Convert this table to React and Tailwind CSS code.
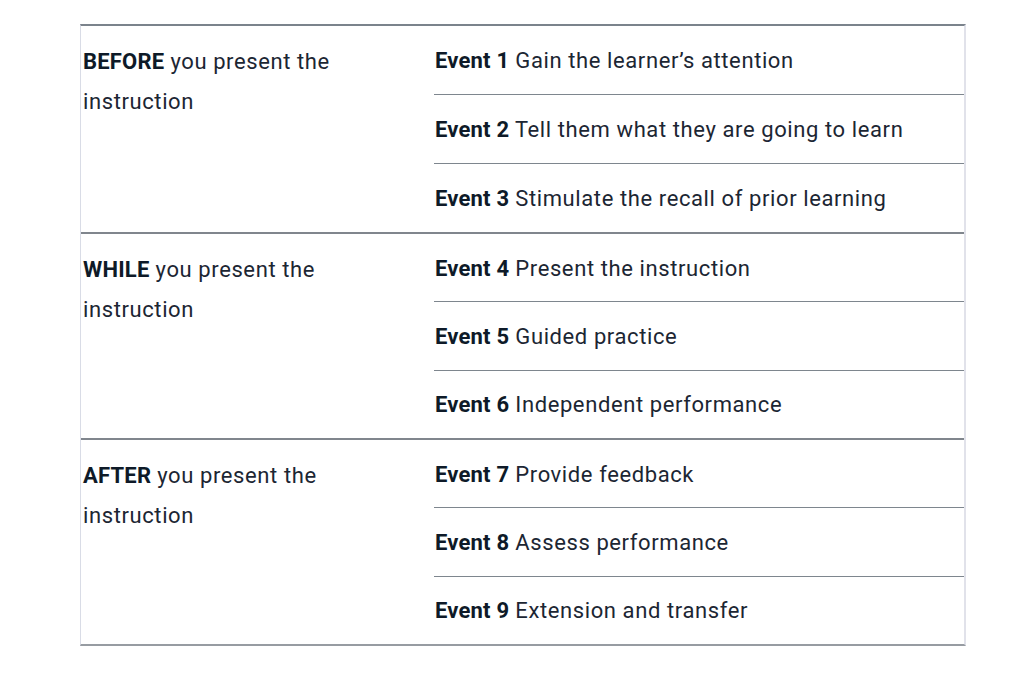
import React from 'react';

const groups = [
  {
    lead: 'BEFORE',
    events: [
      ['Event 1', 'Gain the learner’s attention'],
      ['Event 2', 'Tell them what they are going to learn'],
      ['Event 3', 'Stimulate the recall of prior learning'],
    ],
  },
  {
    lead: 'WHILE',
    events: [
      ['Event 4', 'Present the instruction'],
      ['Event 5', 'Guided practice'],
      ['Event 6', 'Independent performance'],
    ],
  },
  {
    lead: 'AFTER',
    events: [
      ['Event 7', 'Provide feedback'],
      ['Event 8', 'Assess performance'],
      ['Event 9', 'Extension and transfer'],
    ],
  },
];

export default function App() {
  return (
    <div className="w-[1024px] h-[675px] bg-white pt-[24px] pl-[80px] font-['Roboto','Liberation_Sans',sans-serif] text-[22px] leading-[40px] text-[#1c2633] tracking-[0.6px]">
      <div className="w-[886px] border-t-2 border-t-[#7b838c] border-l border-l-[#d9dce6] border-r-2 border-r-[#e1e2ea] border-b-2 border-b-[#979ca2]">
        {groups.map((g, gi) => (
          <div key={g.lead} className={'flex h-[206px] ' + (gi > 0 ? 'border-t-2 border-[#80868d]' : '')}>
            <div className="w-[353px] pl-[2px] pt-[16px] flex flex-col">
              <div>
                <span className="font-bold tracking-[0.2px] text-[#0e1a28]">{g.lead}</span> you present the
              </div>
              <div>instruction</div>
            </div>
            <div className="flex-1 flex flex-col">
              {g.events.map((e, i) => (
                <div key={e[0]} className={'flex-1 flex items-center pt-[2px] ' + (i > 0 ? 'border-t border-[#7e868e]' : '')}>
                  <span className="pl-[1px]">
                    <span className="font-bold tracking-[0.2px] text-[#0e1a28]">{e[0]}</span> {e[1]}
                  </span>
                </div>
              ))}
            </div>
          </div>
        ))}
      </div>
    </div>
  );
}
